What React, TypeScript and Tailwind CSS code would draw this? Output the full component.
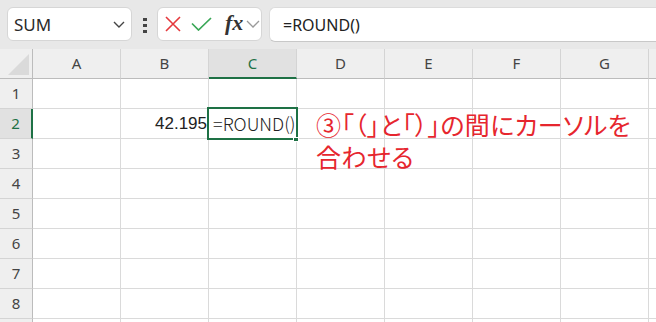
import React from 'react';

const COLS = ['A', 'B', 'C', 'D', 'E', 'F', 'G', 'H'];
const ROWS = [1, 2, 3, 4, 5, 6, 7, 8, 9];
const GREEN = '#1e7145';

function NameBox() {
    return (
        <div className="ml-[7px] mt-[7px] w-[125px] h-[34px] rounded-md bg-white border border-[#d6d6d6] flex items-center justify-between pl-[6px] pr-[5px]">
            <span className="text-[17px] text-[#2b2b2b] font-['Noto_Sans',sans-serif] leading-none pt-[1px]">SUM</span>
            <svg width="14" height="14" viewBox="0 0 14 14" fill="none" stroke="#444" strokeWidth="1.4">
                <path d="M2 5l5 5 5-5" />
            </svg>
        </div>
    );
}

function FormulaButtons() {
    return (
        <div className="ml-[10px] mt-[7px] w-[105px] h-[34px] rounded-md bg-white border border-[#d6d6d6] flex items-center pl-[7px]">
            <svg width="16" height="16" viewBox="0 0 16 16" fill="none" stroke="#e5393d" strokeWidth="1.6">
                <path d="M1 1l14 14M15 1L1 15" />
            </svg>
            <svg className="ml-[10px]" width="21" height="14" viewBox="0 0 21 14" fill="none" stroke="#3aa757" strokeWidth="1.7">
                <path d="M1 6.5l6.5 6.5L20 1" />
            </svg>
            <span className="ml-[13px] text-[22px] italic font-bold text-[#333] font-['Liberation_Serif',serif] leading-none -mt-[3px]">fx</span>
            <svg className="ml-[3px]" width="14" height="14" viewBox="0 0 14 14" fill="none" stroke="#9a9a9a" strokeWidth="1.3">
                <path d="M1 4l6 6 6-6" />
            </svg>
        </div>
    );
}

function Toolbar() {
    return (
        <div className="h-[49px] bg-[#e8e8e8] flex items-start">
            <NameBox />
            <div className="ml-[11px] mt-[18px] flex flex-col gap-[3px]">
                <span className="block w-[4px] h-[3px] bg-[#444]" />
                <span className="block w-[4px] h-[3px] bg-[#444]" />
                <span className="block w-[4px] h-[3px] bg-[#444]" />
            </div>
            <FormulaButtons />
            <div className="ml-[7px] mt-[7px] flex-1 h-[35px] bg-white border-t border-[#dcdcdc] border-b border-b-[#c8c8c8] rounded-l-md border-l border-l-[#dcdcdc] flex items-center pl-[13px]">
                <span className="text-[16px] text-[#222] font-['Noto_Sans',sans-serif] leading-none">=ROUND()</span>
            </div>
        </div>
    );
}

function Sheet() {
    return (
        <div className="relative grid grid-cols-[33px_repeat(8,88px)] grid-rows-[30px_repeat(9,30px)] font-['Noto_Sans_CJK_JP',sans-serif]">
            {/* corner */}
            <div className="bg-[#efefef] border-r border-r-[#bcbcbc] border-b border-b-[#bcbcbc] flex items-end justify-end pr-[3px] pb-[3px]">
                <svg width="21" height="21" viewBox="0 0 21 21">
                    <path d="M21 0V21H0Z" fill="#dadada" />
                </svg>
            </div>
            {COLS.map(c => (
                <div
                    key={c}
                    className={
                        c === 'C'
                            ? 'bg-[#e1e1e1] border-b-2 border-b-[#1e7145] border-r border-r-[#d4d4d4] flex items-center justify-center pt-[1px] text-[15px] text-[#1e7145] font-["Noto_Sans",sans-serif]'
                            : 'bg-[#efefef] border-b border-b-[#bcbcbc] border-r border-r-[#d4d4d4] flex items-center justify-center text-[15px] text-[#444] font-["Noto_Sans",sans-serif]'
                    }
                >
                    {c === 'H' ? '' : c}
                </div>
            ))}
            {ROWS.map(r => (
                <React.Fragment key={r}>
                    <div
                        className={
                            r === 2
                                ? 'bg-[#e1e1e1] border-r-2 border-r-[#1e7145] border-b border-b-[#d4d4d4] flex items-center justify-center text-[15px] text-[#1e7145] font-["Noto_Sans",sans-serif]'
                                : 'bg-[#efefef] border-r border-r-[#bcbcbc] border-b border-b-[#d4d4d4] flex items-center justify-center text-[15px] text-[#444] font-["Noto_Sans",sans-serif]'
                        }
                    >
                        {r === 9 ? '' : r}
                    </div>
                    {COLS.map(c => (
                        <div key={c} className="relative bg-white border-r border-b border-[#dadada] flex items-center">
                            {r === 2 && c === 'B' && (
                                <span className="ml-auto pr-[1px] text-[17px] text-[#222] font-['Liberation_Sans',sans-serif]">42.195</span>
                            )}
                            {r === 2 && c === 'C' && (
                                <>
                                    <span className="pl-[4px] text-[18px] font-light text-[#222] whitespace-nowrap z-10">=ROUND()</span>
                                    <div className="absolute -left-[2px] -top-[2px] w-[91px] h-[33px] border-2 z-20" style={{ borderColor: GREEN }} />
                                    <div className="absolute left-[84px] top-[28px] w-[6px] h-[5px] border border-white z-30" style={{ backgroundColor: GREEN }} />
                                </>
                            )}
                        </div>
                    ))}
                </React.Fragment>
            ))}

            {/* annotation */}
            <div className="absolute left-[316px] top-[59px] text-[25px] leading-[32px] tracking-[0.3px] text-[#e6262e] font-['Noto_Sans_CJK_JP',sans-serif] [font-feature-settings:'palt'] whitespace-nowrap z-40">
                <div>③「（」と「）」の間にカーソルを</div>
                <div>合わせる</div>
            </div>
        </div>
    );
}

export default function App() {
    return (
        <div className="w-[656px] h-[322px] overflow-hidden bg-white">
            <Toolbar />
            <Sheet />
        </div>
    );
}
